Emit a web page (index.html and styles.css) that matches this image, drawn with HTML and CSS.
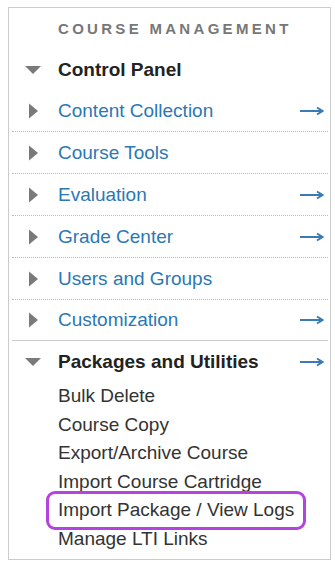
FILE: index.html
```html
<!DOCTYPE html>
<html lang="en">
<head>
  <meta charset="UTF-8">
  <meta name="viewport" content="width=device-width, initial-scale=1.0">
  <title>Course Management</title>
  <link rel="stylesheet" href="styles.css">
</head>
<body>
  <div class="panel">
    <h2 class="panel-title">Course Management</h2>

    <ul class="menu">
      <li class="row row-first">
        <span class="toggle">
          <svg viewBox="0 0 16 16"><path d="M0 4h16L8 12z"/></svg>
        </span>
        <span class="label strong">Control Panel</span>
      </li>
      <li class="row">
        <span class="toggle">
          <svg viewBox="0 0 16 16"><path d="M4 0.5L13 8 4 15.5z"/></svg>
        </span>
        <a href="#" class="label">Content Collection</a>
        <svg class="go" viewBox="0 0 24 10"><path d="M0 5h21"/><path d="M17 1.5L22.5 5 17 8.5"/></svg>
      </li>
      <li class="row">
        <span class="toggle">
          <svg viewBox="0 0 16 16"><path d="M4 0.5L13 8 4 15.5z"/></svg>
        </span>
        <a href="#" class="label">Course Tools</a>
      </li>
      <li class="row">
        <span class="toggle">
          <svg viewBox="0 0 16 16"><path d="M4 0.5L13 8 4 15.5z"/></svg>
        </span>
        <a href="#" class="label">Evaluation</a>
        <svg class="go" viewBox="0 0 24 10"><path d="M0 5h21"/><path d="M17 1.5L22.5 5 17 8.5"/></svg>
      </li>
      <li class="row">
        <span class="toggle">
          <svg viewBox="0 0 16 16"><path d="M4 0.5L13 8 4 15.5z"/></svg>
        </span>
        <a href="#" class="label">Grade Center</a>
        <svg class="go" viewBox="0 0 24 10"><path d="M0 5h21"/><path d="M17 1.5L22.5 5 17 8.5"/></svg>
      </li>
      <li class="row">
        <span class="toggle">
          <svg viewBox="0 0 16 16"><path d="M4 0.5L13 8 4 15.5z"/></svg>
        </span>
        <a href="#" class="label">Users and Groups</a>
      </li>
      <li class="row row-last">
        <span class="toggle">
          <svg viewBox="0 0 16 16"><path d="M4 0.5L13 8 4 15.5z"/></svg>
        </span>
        <a href="#" class="label">Customization</a>
        <svg class="go" viewBox="0 0 24 10"><path d="M0 5h21"/><path d="M17 1.5L22.5 5 17 8.5"/></svg>
      </li>
      <li class="row row-open">
        <span class="toggle">
          <svg viewBox="0 0 16 16"><path d="M0 4h16L8 12z"/></svg>
        </span>
        <span class="label strong">Packages and Utilities</span>
        <svg class="go" viewBox="0 0 24 10"><path d="M0 5h21"/><path d="M17 1.5L22.5 5 17 8.5"/></svg>
      </li>
    </ul>

    <ul class="sub-menu">
      <li>Bulk Delete</li>
      <li>Course Copy</li>
      <li>Export/Archive Course</li>
      <li>Import Course Cartridge</li>
      <li><span class="highlight">Import Package / View Logs</span></li>
      <li>Manage LTI Links</li>
    </ul>
  </div>
</body>
</html>
```

FILE: styles.css
```css
body {
  margin: 0;
  font-family: "Liberation Sans", Arial, Helvetica, sans-serif;
  background: #fff;
}

.panel {
  box-sizing: border-box;
  width: 323px;
  height: 553px;
  margin: 7px 0 0 8px;
  border: 1px solid #ccc;
}

.panel-title {
  margin: 0;
  padding: 11px 0 12px 49px;
  font-size: 15px;
  line-height: 19px;
  font-weight: bold;
  letter-spacing: 3.3px;
  text-transform: uppercase;
  color: #777;
}

.menu {
  list-style: none;
  margin: 0;
  padding: 0 2px 0 3px;
}

.row {
  box-sizing: border-box;
  display: flex;
  align-items: center;
  height: 42px;
  border-bottom: 1px dotted #bbb;
}

.row-first {
  height: 40px;
  border-bottom: none;
}

.row-last {
  height: 41px;
  border-bottom: 1px solid #ccc;
}

.row-open {
  height: 41px;
  border-bottom: none;
}

.toggle {
  display: flex;
  align-items: center;
  width: 46px;
  height: 16px;
  padding-left: 13px;
  box-sizing: border-box;
}

.toggle svg {
  width: 16px;
  height: 16px;
  fill: #7a7a7a;
}

.label {
  font-size: 19px;
  color: #2a78b4;
  text-decoration: none;
  white-space: nowrap;
}

.label.strong {
  font-weight: bold;
  color: #222;
}

.go {
  width: 24px;
  height: 10px;
  margin-left: auto;
  margin-right: 4px;
  fill: none;
  stroke: #3a7bb5;
  stroke-width: 2;
}

.sub-menu {
  list-style: none;
  margin: 0;
  padding: 0 0 0 49px;
  font-size: 19px;
  line-height: 28.5px;
  color: #333;
}

.highlight {
  position: relative;
  display: inline-block;
}

/* annotation box drawn round the item */
.highlight::after {
  content: "";
  position: absolute;
  top: -5px;
  bottom: -5px;
  left: -12px;
  right: -12px;
  border: 3px solid #b444df;
  border-radius: 9px;
}
```
